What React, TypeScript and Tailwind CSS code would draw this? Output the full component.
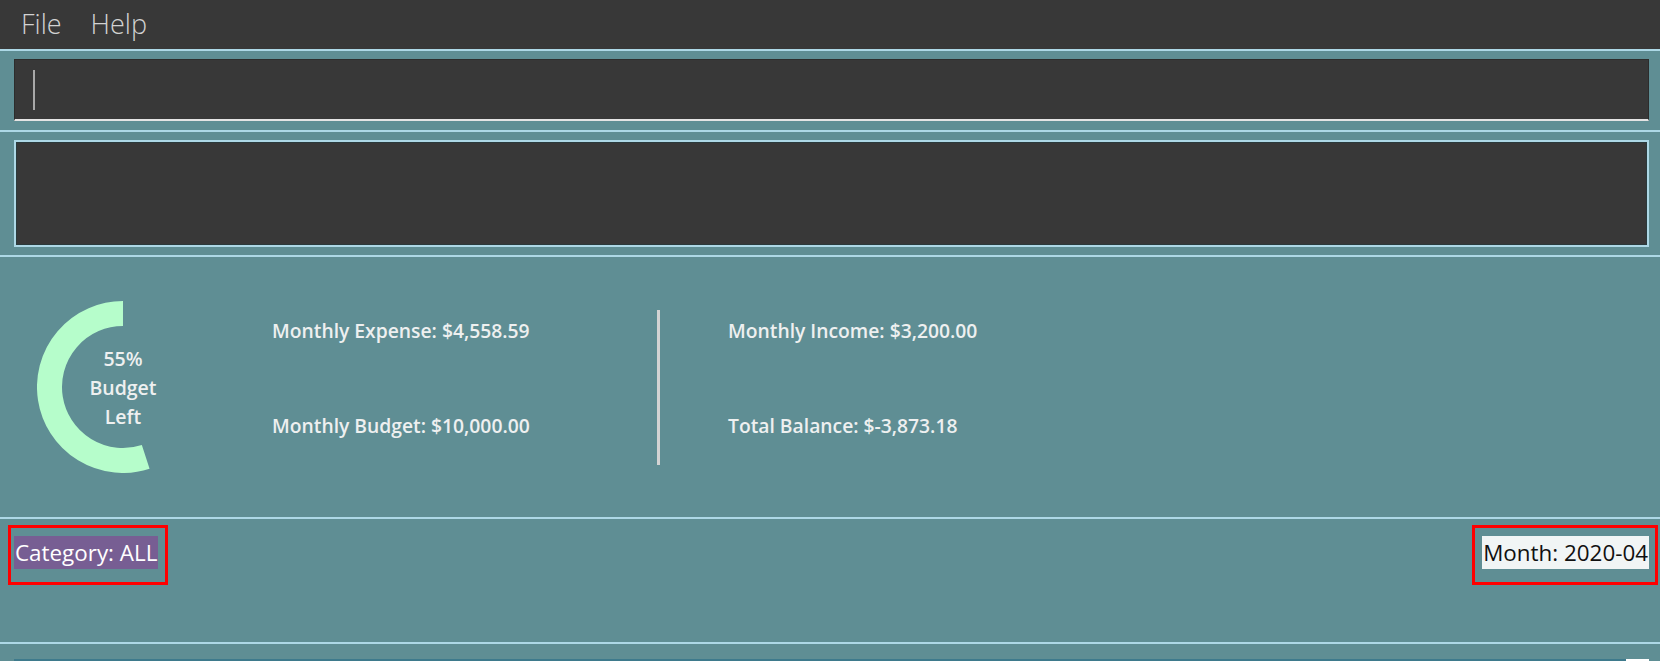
import React from "react"

const font = { fontFamily: '"Open Sans", "Noto Sans", sans-serif' }

function BudgetRing({ left }: { left: number }) {
  const cx = 86
  const cy = 86
  const r = 73.5
  const a = (left / 100) * 2 * Math.PI
  const x = cx - r * Math.sin(a)
  const y = cy - r * Math.cos(a)
  const large = left > 50 ? 1 : 0
  return (
    <div className="relative w-[172px] h-[172px] shrink-0">
      <svg width="172" height="172" viewBox="0 0 172 172" className="absolute inset-0">
        <path
          d={`M ${cx} ${cy - r} A ${r} ${r} 0 ${large} 0 ${x.toFixed(2)} ${y.toFixed(2)}`}
          fill="none"
          stroke="#b6fdcb"
          strokeWidth="25"
        />
      </svg>
      <div className="absolute inset-0 flex flex-col items-center justify-center text-[#eef0f0] text-[19.5px] font-semibold leading-[29px] pt-[1px]">
        <span>{left}%</span>
        <span>Budget</span>
        <span>Left</span>
      </div>
    </div>
  )
}

function Line() {
  return <div className="h-[2px] bg-[#add8e6] shrink-0" />
}

export default function App() {
  return (
    <div className="w-[1660px] h-[661px] overflow-hidden bg-[#5f8e94] flex flex-col" style={font}>
      <div className="h-[49px] bg-[#383838] flex items-center pl-[21px] gap-[29px] text-[27px] font-light text-[#d2d2d2] shrink-0">
        <span>File</span>
        <span>Help</span>
      </div>
      <Line />

      <div className="pt-[8px] pb-[9px] pl-[14px] pr-[11px]">
        <div className="h-[62px] bg-[#383838] border border-[#2c2c2c] border-b-2 border-b-[#e4e4e4] flex items-center pl-[18px]">
          <div className="w-[2px] h-[40px] bg-[#a8a8a8]" />
        </div>
      </div>
      <Line />

      <div className="pt-[8px] pb-[8px] pl-[14px] pr-[11px]">
        <div className="h-[107px] border-2 border-[#add8e6]">
          <div className="h-full bg-[#383838] border border-[#2a3a3c]" />
        </div>
      </div>
      <Line />

      <div className="h-[260px] flex items-center pl-[37px] text-[#eef0f0] text-[19.3px] font-semibold shrink-0">
        <BudgetRing left={55} />
        <div className="self-start mt-[62px] ml-[63px] w-[385px] flex flex-col gap-[71px] leading-[24px] whitespace-nowrap">
          <span>Monthly Expense: $4,558.59</span>
          <span>Monthly Budget: $10,000.00</span>
        </div>
        <div className="w-[3px] h-[155px] bg-[#d3d3d3]" />
        <div className="self-start mt-[62px] ml-[68px] flex flex-col gap-[71px] leading-[24px] whitespace-nowrap">
          <span>Monthly Income: $3,200.00</span>
          <span>Total Balance: $-3,873.18</span>
        </div>
      </div>
      <Line />

      <div className="h-[123px] flex items-start justify-between pl-[14px] pr-[11px] pt-[6px] shrink-0">
        <div className="-ml-[6px] border-[3px] border-[#ff0000] pl-[3px] pr-[7px] pt-[8px] pb-[13px]">
          <div className="h-[33px] bg-[#775e93] text-white text-[22.4px] leading-[33px] px-[1px] whitespace-nowrap">
            Category: ALL
          </div>
        </div>
        <div className="-mr-[9px] border-[3px] border-[#ff0000] pl-[7px] pr-[6px] pt-[8px] pb-[13px]">
          <div className="h-[33px] bg-[#f1f5f5] text-[#101010] text-[22.4px] leading-[33px] px-[1px] whitespace-nowrap">
            Month: 2020-04
          </div>
        </div>
      </div>
      <Line />

      <div className="flex-1 flex items-end pl-[14px] pr-[11px]">
        <div className="h-[2px] flex-1 bg-[#3e7a8c]" />
        <div className="h-[2px] w-[23px] bg-white" />
      </div>
    </div>
  )
}
